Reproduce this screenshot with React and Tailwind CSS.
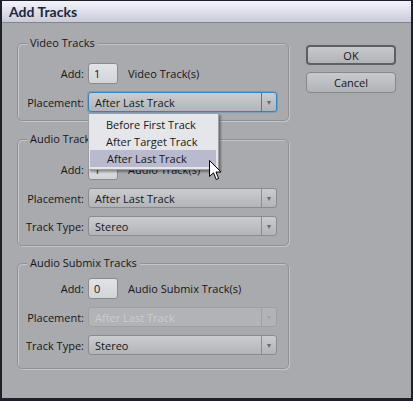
import React from "react";

function Select({ value, focused, disabled, children }) {
  return (
    <div
      className={`relative flex h-5 w-[189px] items-center rounded-[3px] border ${
        disabled ? "bg-[#b2b3b7]" : "bg-gradient-to-b from-[#cbccd0] to-[#b3b4b8]"
      } ${
        focused
          ? "border-[#2d84c6] shadow-[0_0_0_1px_rgba(45,132,198,0.35)]"
          : disabled
          ? "border-[#9e9fa3]"
          : "border-[#8a8b8f]"
      }`}
    >
      <span className={`flex-1 pl-[6px] leading-none ${disabled ? "text-[#cbccd0]" : "text-[#161616]"}`}>
        {value}
      </span>
      <div
        className={`flex h-full w-[15px] items-center justify-center border-l ${
          focused ? "border-[#2d84c6]" : disabled ? "border-[#9e9fa3]" : "border-[#8a8b8f]"
        }`}
      >
        <span className={`text-[7px] leading-none ${disabled ? "text-[#a2a3a7]" : "text-[#6a6b70]"}`}>▼</span>
      </div>
      {children}
    </div>
  );
}

function NumberBox({ value }) {
  return (
    <div className="flex h-[21px] w-[30px] items-center rounded-[3px] border border-[#8a8b8f] bg-gradient-to-b from-[#e2e3e6] to-[#d3d4d7] pl-[5px] leading-none text-[#161616]">
      {value}
    </div>
  );
}

function Row({ label, children }) {
  return (
    <div className="flex items-center gap-1">
      <span className="w-[66px] text-right leading-none text-[#161616]">{label}</span>
      {children}
    </div>
  );
}

function Group({ title, className, rowsClass, children }) {
  return (
    <div
      className={`flex flex-col rounded-[5px] border border-[#909195] shadow-[inset_1px_1px_0_#c4c5c8,1px_1px_0_#c4c5c8] ${className}`}
    >
      <span className="-mt-[9px] ml-[9px] h-4 w-fit bg-[#a9aaae] px-[3px] leading-4 text-[#161616]">{title}</span>
      <div className={`flex flex-col ${rowsClass}`}>{children}</div>
    </div>
  );
}

function Cursor() {
  return (
    <svg className="absolute left-[120px] top-[46px]" width="13" height="21" viewBox="0 0 13 21">
      <path
        d="M0.5 0.5 L0.5 16.5 L4.5 12.8 L7.2 19.5 L9.6 18.5 L7 12 L12 12 Z"
        fill="#ffffff"
        stroke="#000000"
        strokeWidth="1"
        strokeLinejoin="miter"
      />
    </svg>
  );
}

export default function App() {
  return (
    <div className="flex h-[401px] w-[413px] flex-col overflow-hidden border-x-2 border-b-[3px] border-t border-[#1d2029] bg-[#a9aaae] font-['Open_Sans',sans-serif] text-[11px]">
      {/* title bar */}
      <div className="flex h-[22px] shrink-0 items-center border-b border-[#84858c] bg-gradient-to-b from-[#f3f4fa] to-[#c9cbd9] pl-[7px]">
        <span className="font-['Lato',sans-serif] text-[14px] font-bold leading-none text-[#1b2740]">Add Tracks</span>
      </div>

      <div className="flex flex-1 pl-[15px] pr-[15px] pt-5">
        {/* left column */}
        <div className="flex w-[272px] flex-col">
          <Group title="Video Tracks" className="h-[78px]" rowsClass="mt-3 gap-2">
            <Row label="Add:">
              <NumberBox value="1" />
              <span className="ml-[6px] leading-none text-[#161616]">Video Track(s)</span>
            </Row>
            <Row label="Placement:">
              <Select value="After Last Track" focused>
                <div className="absolute left-[-1px] top-[20px] z-10 flex w-[131px] flex-col border border-[#9c9da2] bg-[#e5e6e9] py-[2px] pl-px pr-[2px] shadow-[2px_2px_2px_rgba(0,0,0,0.35)]">
                  <span className="h-[17px] pl-[16px] leading-[17px] text-[#161616]">Before First Track</span>
                  <span className="h-[17px] pl-[16px] leading-[17px] text-[#161616]">After Target Track</span>
                  <span className="h-[17px] bg-[#b9bace] pl-[17px] leading-[17px] text-[#161616]">After Last Track</span>
                  <Cursor />
                </div>
              </Select>
            </Row>
          </Group>

          <Group title="Audio Tracks" className="mt-[18px] h-[107px]" rowsClass="mt-3 gap-2">
            <Row label="Add:">
              <NumberBox value="1" />
              <span className="ml-[6px] leading-none text-[#161616]">Audio Track(s)</span>
            </Row>
            <Row label="Placement:">
              <Select value="After Last Track" />
            </Row>
            <Row label="Track Type:">
              <Select value="Stereo" />
            </Row>
          </Group>

          <Group title="Audio Submix Tracks" className="mt-[17px] h-[106px]" rowsClass="mt-[7px] gap-[8px]">
            <Row label="Add:">
              <NumberBox value="0" />
              <span className="ml-[6px] leading-none text-[#161616]">Audio Submix Track(s)</span>
            </Row>
            <Row label="Placement:">
              <Select value="After Last Track" disabled />
            </Row>
            <Row label="Track Type:">
              <Select value="Stereo" />
            </Row>
          </Group>
        </div>

        {/* right column */}
        <div className="ml-[17px] mt-[2px] flex w-[90px] flex-col gap-[7px]">
          <button className="flex h-5 items-center justify-center rounded-[4px] border-2 border-[#5e5f64] bg-gradient-to-b from-[#c8c9cd] to-[#b2b3b7] leading-none text-[#161616]">
            OK
          </button>
          <button className="flex h-[21px] items-center justify-center rounded-[4px] border border-[#86878b] bg-gradient-to-b from-[#c8c9cd] to-[#b2b3b7] leading-none text-[#161616]">
            Cancel
          </button>
        </div>
      </div>
    </div>
  );
}
